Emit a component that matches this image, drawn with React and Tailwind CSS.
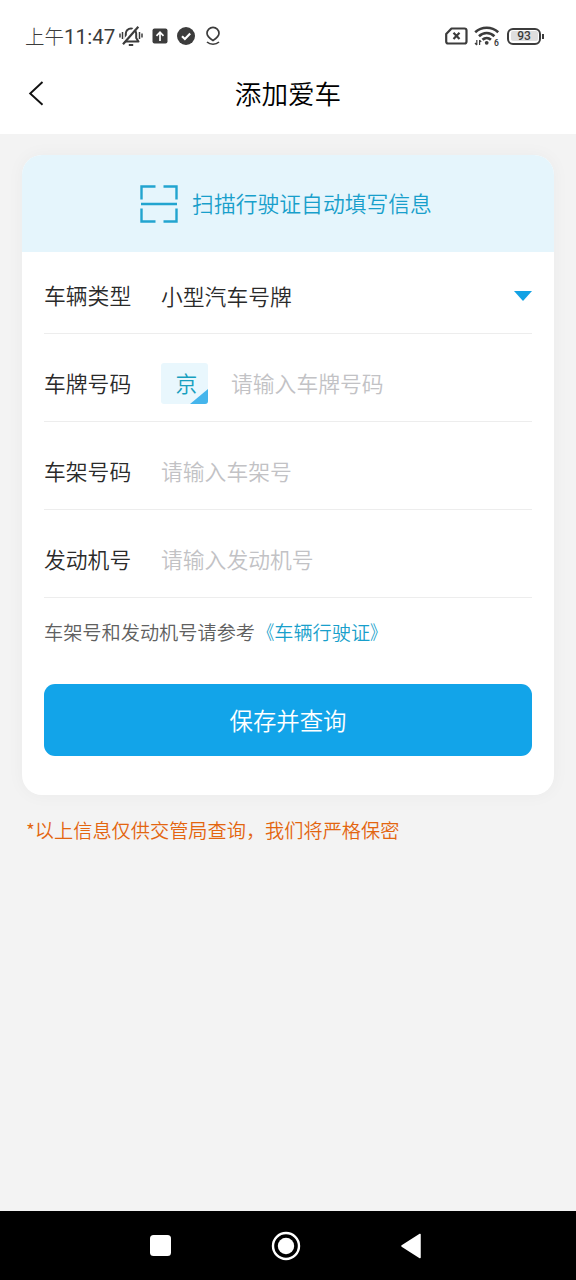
const StatusBar = () => (
    <div className="flex h-[52px] items-center pt-5 pl-[25px] pr-8 text-[#3c3c3c]">
        <span className="pt-0.5 text-[20.6px] leading-8 font-normal whitespace-nowrap font-[Roboto,'Noto_Sans_CJK_SC',sans-serif]">
            <span className="text-[19.500px] font-light">上午</span>11:47
        </span>
        <svg className="ml-[4px] shrink-0" width="24" height="22" viewBox="0 0 24 22" fill="none" stroke="currentColor" strokeWidth="2">
            <path d="M4.500 16.500h15l-2.300-3.500V8.600a5.200 5.200 0 0 0-10.400 0V13z" strokeLinejoin="round" />
            <path d="M9.800 20h4.400" />
            <path d="M18 .5 2.600 18" stroke="#fff" strokeWidth="2.200" />
            <path d="M19.300 1.800 4 19.200" strokeWidth="2.200" />
            <path d="M1 8.500v4M3.500 7v7M23 8.500v4M20.500 7v7" strokeWidth="1.500" />
        </svg>
        <svg className="ml-[9px] shrink-0" width="16" height="16" viewBox="0 0 16 16">
            <rect x="0.5" y="0.5" width="15" height="15" rx="2" fill="currentColor" />
            <path d="M8 13V4.500M4.500 7.800 8 4.200l3.500 3.600" fill="none" stroke="#fff" strokeWidth="1.700" />
        </svg>
        <svg className="ml-[9px] shrink-0" width="18" height="18" viewBox="0 0 18 18">
            <circle cx="9" cy="9" r="9" fill="currentColor" />
            <path d="m5 9.200 2.900 2.800 5.300-5.400" fill="none" stroke="#fff" strokeWidth="2.200" />
        </svg>
        <svg className="ml-[10px] shrink-0" width="16" height="20" viewBox="0 0 16 20" fill="none" stroke="currentColor" strokeWidth="1.700">
            <path d="M8 14.500C4.500 12.300 2 10.500 2 7.300a6 6 0 0 1 12 0c0 3.200-2.500 5-6 7.200z" />
            <path d="M2 16c3.200 3 8.800 3 12 0" />
        </svg>

        <svg className="ml-auto" width="23" height="18" viewBox="0 0 23 18" fill="none" stroke="currentColor" strokeWidth="2.200">
            <path d="M6.500 1.500H19.500a2 2 0 0 1 2 2v11a2 2 0 0 1-2 2H3.200a2 2 0 0 1-2-2V7z" strokeLinejoin="round" />
            <path d="m8.500 5.800 6 6.200M14.500 5.800l-6 6.200" />
        </svg>
        <svg className="ml-[6px]" width="26" height="20" viewBox="0 0 26 20" fill="none" stroke="currentColor">
            <path d="M1.200 6.200c6.500-6 16.500-6 23 0" strokeWidth="2.600" />
            <path d="M5 10.200c4.300-4.200 11.100-4.200 15.400 0" strokeWidth="2.600" />
            <path d="M8.500 13.800c2.400-2.300 6-2.300 8.400 0" strokeWidth="2.600" />
            <circle cx="12.700" cy="16.800" r="1.900" fill="currentColor" stroke="none" />
            <path d="M2.800 14v5M1 17l1.800 2M5.600 19v-5M7.200 16l-1.600-2" strokeWidth="1.200" />
            <text x="20" y="19.500" fontSize="8.500" fontWeight="600" fontFamily="Roboto, sans-serif" fill="currentColor" stroke="none">6</text>
        </svg>
        <div className="ml-[7px] flex h-[17px] w-[34px] items-center justify-center rounded-[6px] border-2 border-[#3c3c3c] p-[1.5px]">
            <span className="flex h-full w-full items-center justify-center rounded-[2px] bg-[#dedede] text-[12px] leading-none font-medium font-[Roboto,sans-serif]">
                93
            </span>
        </div>
        <span className="ml-px h-[5px] w-[2px] bg-[#3c3c3c]" />
    </div>
);

const Header = () => (
    <header className="bg-white">
        <StatusBar />
        <div className="grid h-[82px] grid-cols-[72px_1fr_72px] items-center">
            <svg className="ml-[28px]" width="17" height="26" viewBox="0 0 17 26" fill="none" stroke="#111" strokeWidth="1.900">
                <path d="M14.500 2 2.200 13.500l12.300 11.200" />
            </svg>
            <h1 className="text-center text-[26.6px] leading-10 font-[350] text-black">添加爱车</h1>
        </div>
    </header>
);

const ScanIcon = () => (
    <svg width="38" height="38" viewBox="0 0 38 38" fill="none" stroke="#22a4cf" strokeWidth="2.400">
        <path d="M1.500 14.500v-13h14M23.500 1.500h13v13M36.500 23.500v13h-13M15.500 36.500h-14v-13" />
        <path d="M1 19h36" />
    </svg>
);

const Row = ({ label, children }) => (
    <div className="flex h-[88px] items-center border-b border-[#ededed] pt-3 text-[21.8px]">
        <span className="w-[117px] shrink-0 text-[#2a2a2a]">{label}</span>
        {children}
    </div>
);

const Placeholder = ({ children }) => <span className="text-[#c2c2c5]">{children}</span>;

const NavBar = () => (
    <nav className="flex h-[69px] items-center bg-black">
        <span className="ml-[150px] size-[21px] rounded-[3.5px] bg-white" />
        <svg className="ml-[100px]" width="30" height="30" viewBox="0 0 30 30">
            <circle cx="15" cy="15" r="13" fill="none" stroke="#fff" strokeWidth="2.400" />
            <circle cx="15" cy="15" r="8.200" fill="#fff" />
        </svg>
        <svg className="ml-[100px]" width="20" height="26" viewBox="0 0 20 26">
            <path d="M1 13 19 1.500v23z" fill="#fff" stroke="#fff" strokeWidth="1.500" strokeLinejoin="round" />
        </svg>
    </nav>
);

export default function App() {
    return (
        <div className="flex h-[1280px] w-[576px] flex-col overflow-hidden bg-[#f3f3f3] font-['Noto_Sans_CJK_SC',sans-serif] font-[350]">
            <Header />

            <main className="flex-1 px-[22px] pt-[21px]">
                <section className="h-[640px] overflow-hidden rounded-[20px] bg-white shadow-[0_0_18px_rgba(0,0,0,0.04)]">
                    <div className="flex h-[97px] items-center justify-center gap-[14px] bg-[#e5f5fc] pr-1 text-[21.8px] text-[#189fcb]">
                        <ScanIcon />
                        <span>扫描行驶证自动填写信息</span>
                    </div>

                    <div className="-mt-1.5 px-[22px]">
                        <Row label="车辆类型">
                            <span className="pt-0.5 text-[#2a2a2a]">小型汽车号牌</span>
                            <svg className="ml-auto" width="18" height="10" viewBox="0 0 18 10">
                                <path d="M0 0h18l-9 10z" fill="#13a2e4" />
                            </svg>
                        </Row>
                        <Row label="车牌号码">
                            <span className="relative mr-[23px] flex h-[41px] w-[47px] items-center justify-center overflow-hidden rounded-[3px] bg-[#e9f7fd] pl-1 text-[#189fbf]">
                                京
                                <svg className="absolute right-0 bottom-0" width="18" height="15" viewBox="0 0 18 15">
                                    <path d="M18 0v15H0z" fill="#45b5ec" />
                                </svg>
                            </span>
                            <Placeholder>请输入车牌号码</Placeholder>
                        </Row>
                        <Row label="车架号码">
                            <Placeholder>请输入车架号</Placeholder>
                        </Row>
                        <Row label="发动机号">
                            <Placeholder>请输入发动机号</Placeholder>
                        </Row>

                        <p className="mt-5 text-[19.2px] leading-7 whitespace-nowrap text-[#606060]">
                            车架号和发动机号请参考
                            <a className="text-[#189fcb]">
                                <span className="inline-block origin-right scale-x-[0.85]">《</span>
                                车辆行驶证
                                <span className="inline-block origin-left scale-x-[0.85]">》</span>
                            </a>
                        </p>
                        <button className="mt-[38px] flex h-[72px] w-full items-center justify-center rounded-[11px] bg-[#12a4e9] pt-0.5 text-[23.4px] text-white">
                            保存并查询
                        </button>
                    </div>
                </section>

                <p className="mt-[21px] pl-1 text-[19.2px] leading-7 whitespace-nowrap text-[#e3650f]">
                    *以上信息仅供交管局查询，我们将严格保密
                </p>
            </main>

            <NavBar />
        </div>
    );
}
